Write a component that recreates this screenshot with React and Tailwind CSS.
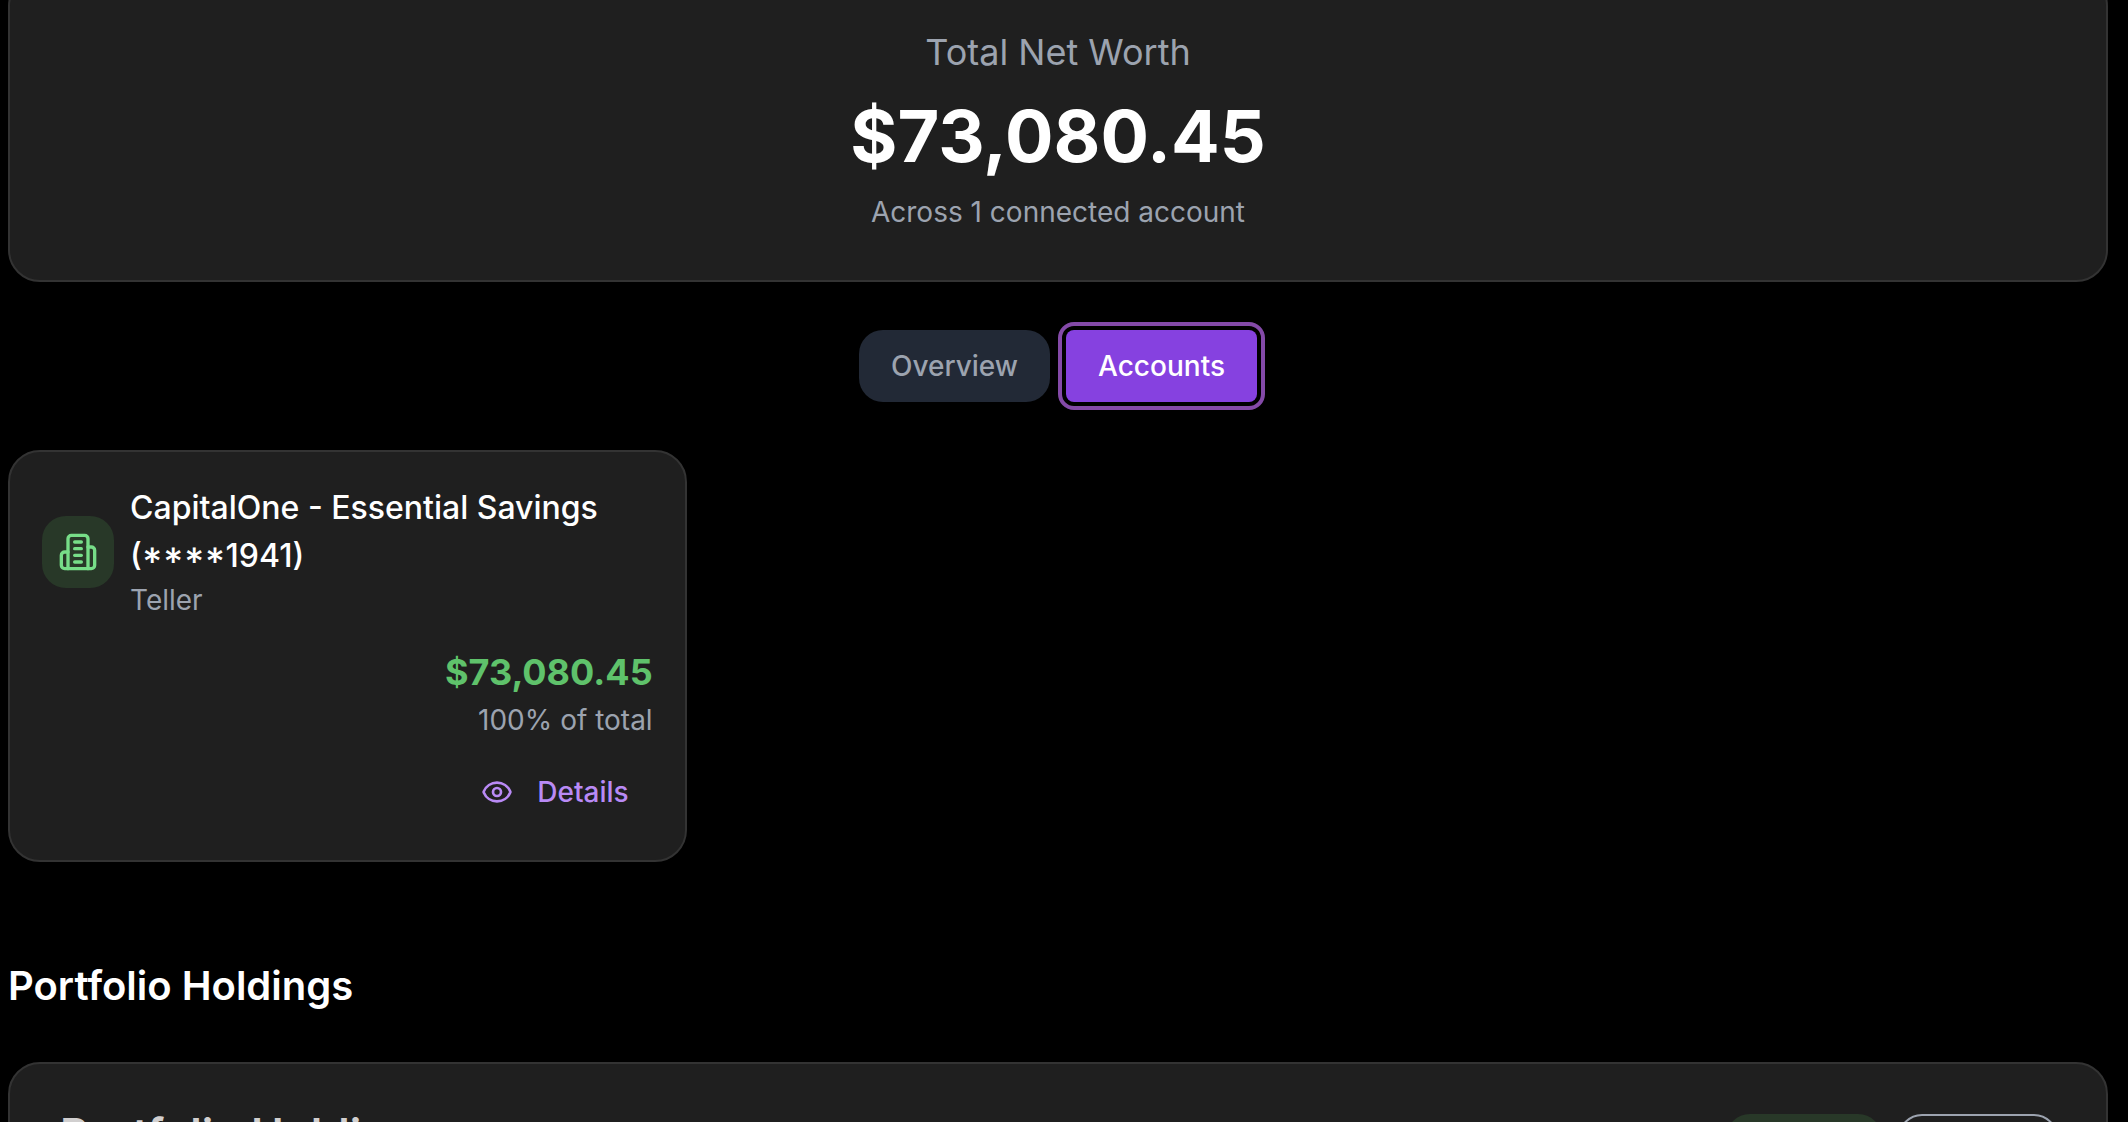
import { Eye } from "lucide-react";

const cardClass = "rounded-[32px] border-2 border-[#333333] bg-[#1f1f1f]";

function BuildingIcon({ className }) {
  return (
    <svg
      className={className}
      viewBox="0 0 24 24"
      fill="none"
      stroke="currentColor"
      strokeWidth="2"
      strokeLinecap="round"
      strokeLinejoin="round"
      aria-hidden="true"
    >
      <path d="M6 22V4a2 2 0 0 1 2-2h8a2 2 0 0 1 2 2v18Z" />
      <path d="M6 12H4a2 2 0 0 0-2 2v6a2 2 0 0 0 2 2h2" />
      <path d="M18 9h2a2 2 0 0 1 2 2v9a2 2 0 0 1-2 2h-2" />
      <path d="M10 6h4" />
      <path d="M10 10h4" />
      <path d="M10 14h4" />
      <path d="M10 18h4" />
    </svg>
  );
}

function NetWorth() {
  return (
    <section className={`${cardClass} -mt-[26px] flex flex-col items-center gap-4 p-12`}>
      <h2 className="text-[36px] leading-[56px] text-[#9ca3af]">Total Net Worth</h2>
      <p className="text-[72px] leading-[80px] font-bold text-white">$73,080.45</p>
      <p className="text-[28px] leading-[40px] text-[#9ca3af]">Across 1 connected account</p>
    </section>
  );
}

function Tabs() {
  return (
    <nav className="flex justify-center gap-4 text-[28px] leading-[40px] font-medium">
      <button type="button" className="rounded-3xl bg-[#222936] px-8 py-4 text-[#9ca3af]">
        Overview
      </button>
      <button
        type="button"
        className="rounded-lg bg-[#8641e0] px-8 py-4 text-white outline-4 outline-offset-4 outline-[#844aa8]"
      >
        Accounts
      </button>
    </nav>
  );
}

function AccountCard() {
  return (
    <article className={`${cardClass} flex flex-col gap-6 p-8`}>
      <div className="flex items-center gap-4">
        <div className="flex size-[72px] shrink-0 items-center justify-center rounded-3xl bg-[#283828]">
          <BuildingIcon className="size-10 text-[#77dd88]" />
        </div>
        <div>
          <h3 className="text-[32px] leading-[48px] font-medium text-white [font-feature-settings:'case']">
            CapitalOne - Essential Savings (****1941)
          </h3>
          <p className="text-[28px] leading-[40px] text-[#9ca3af]">Teller</p>
        </div>
      </div>
      <div className="flex flex-col items-end">
        <p className="text-[36px] leading-[56px] font-bold text-[#5fc26b]">$73,080.45</p>
        <p className="text-[28px] leading-[40px] text-[#9ca3af]">100% of total</p>
        <button
          type="button"
          className="mt-4 flex items-center gap-6 px-6 py-4 text-[28px] leading-[40px] font-medium text-[#b98af5]"
        >
          <Eye className="size-8" />
          Details
        </button>
      </div>
    </article>
  );
}

function Holdings() {
  return (
    <section className="mt-12 flex flex-col gap-12">
      <h2 className="text-[40px] leading-[56px] font-semibold text-white">Portfolio Holdings</h2>
      <div className={`${cardClass} flex items-start justify-between py-[50px] pr-12 pl-[50px]`}>
        <h3 className="text-[44px] leading-[40px] font-semibold text-[#d1cfcf]">Portfolio Holdings</h3>
        <div className="flex gap-4">
          <button type="button" className="h-16 w-[156px] rounded-3xl bg-[#283828]" aria-label="Add holding" />
          <button type="button" className="h-16 w-40 rounded-3xl border-2 border-[#9ca3af]" aria-label="Refresh holdings" />
        </div>
      </div>
    </section>
  );
}

export default function App() {
  return (
    <div className="h-screen overflow-hidden bg-black font-['Inter',sans-serif]">
      <main className="mr-5 ml-2 flex flex-col gap-12">
        <NetWorth />
        <Tabs />
        <div className="grid grid-cols-3 gap-8">
          <AccountCard />
        </div>
        <Holdings />
      </main>
    </div>
  );
}
